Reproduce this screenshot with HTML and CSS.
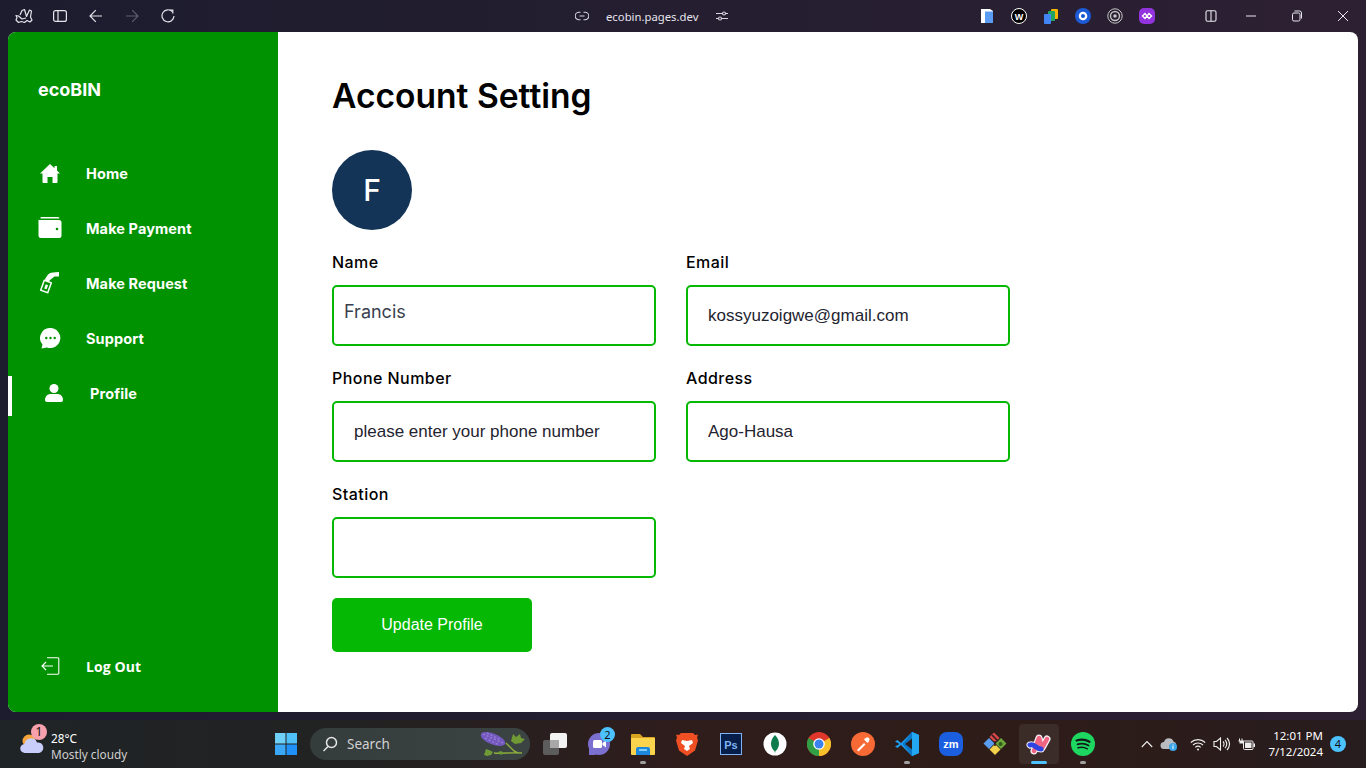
FILE: index.html
```html
<!DOCTYPE html>
<html lang="en">
<head>
    <meta charset="UTF-8">
    <meta name="viewport" content="width=device-width, initial-scale=1.0">
    <title>ecoBIN - Account Setting</title>
    <link rel="stylesheet" href="styles.css">
</head>
<body>

    <!-- browser title bar -->
    <div class="titlebar">
        <div class="tbar-left">
            <span class="tbar-btn"><svg width="18" height="16" viewBox="0 0 18 16" fill="none" stroke="#e4e4ec" stroke-width="1.200" stroke-linejoin="round"><path d="M5 7 7 2.500l2.500-1 2 7 3-6.500 2 1-1 6 1.500 3-2 2-3-1.500-2.500 2-3-1-3 1-2.500-2.500 1-2.500-1-2 2.500.500 3.500 3 4-1"/></svg></span>
            <span class="tbar-btn"><svg width="16" height="14" viewBox="0 0 16 14" fill="none" stroke="#e4e4ec" stroke-width="1.200"><rect x="1.600" y="1.600" width="12.800" height="10.800" rx="2"/><path d="M6 1.600v10.800"/></svg></span>
            <span class="tbar-btn"><svg width="14" height="14" viewBox="0 0 14 14" fill="none" stroke="#e4e4ec" stroke-width="1.200"><path d="M13 7H1.200M6.800 1.200 1 7l5.800 5.800"/></svg></span>
            <span class="tbar-btn"><svg width="14" height="14" viewBox="0 0 14 14" fill="none" stroke="#5f5c6c" stroke-width="1.200"><path d="M1 7h11.800M7.200 1.200 13 7l-5.800 5.800"/></svg></span>
            <span class="tbar-btn"><svg width="14" height="14" viewBox="0 0 14 14" fill="none" stroke="#e4e4ec" stroke-width="1.200"><path d="M11.500 2.800A6 6 0 1 0 13 7"/><path d="M8.500 1.200h3.300v3.300" /></svg></span>
        </div>
        <div class="tbar-url">
            <svg width="14" height="10" viewBox="0 0 14 10" fill="none" stroke="#d8d6e0" stroke-width="1.100"><path d="M5.500 1.200H4a3.800 3.800 0 0 0 0 7.600h1.500M8.500 1.200H10a3.800 3.800 0 0 1 0 7.600H8.500M4.500 5h5"/></svg>
            <span class="url-text">ecobin.pages.dev</span>
            <svg width="14" height="12" viewBox="0 0 14 12" fill="none" stroke="#d8d6e0" stroke-width="1.100"><path d="M1 3.500h6.500M10.500 3.500H13M1 8.500h2.500M6.500 8.500H13"/><circle cx="9" cy="3.500" r="1.500"/><circle cx="5" cy="8.500" r="1.500"/></svg>
        </div>
        <div class="tbar-ext">
            <span class="ext"><svg width="14" height="16" viewBox="0 0 14 16"><path d="M1 1h9l3 2v12H1z" fill="#fff"/><rect x="5" y="3.500" width="8" height="11.500" fill="#5a9cf5"/></svg></span>
            <span class="ext"><svg width="16" height="16" viewBox="0 0 16 16"><circle cx="8" cy="8" r="7.500" fill="#000" stroke="#fff"/><text x="8" y="11.500" class="ext-w">W</text></svg></span>
            <span class="ext"><svg width="16" height="16" viewBox="0 0 16 16"><rect x="8" y="1" width="7" height="10" rx="1" fill="#f5b400"/><rect x="5" y="3" width="7" height="10" rx="1" fill="#1fa463"/><rect x="1" y="6" width="7" height="10" rx="1" fill="#4285f4"/></svg></span>
            <span class="ext"><svg width="16" height="16" viewBox="0 0 16 16"><circle cx="8" cy="8" r="8" fill="#1d5ad6"/><circle cx="8" cy="8" r="3.200" fill="none" stroke="#fff" stroke-width="2.200"/></svg></span>
            <span class="ext"><svg width="16" height="16" viewBox="0 0 16 16" fill="none" stroke="#c6c6c6"><circle cx="8" cy="8" r="7.200"/><circle cx="8" cy="8" r="4.500" stroke-width="1.400"/><circle cx="8" cy="8" r="1.800" fill="#c6c6c6" stroke="none"/></svg></span>
            <span class="ext"><svg width="16" height="16" viewBox="0 0 16 16"><rect width="16" height="16" rx="5" fill="#9333dd"/><path d="M3.500 8 6 5.500 10 10.500 12.500 8 10 5.500 6 10.500z" fill="none" stroke="#fff" stroke-width="1.400"/></svg></span>
        </div>
        <div class="tbar-win">
            <span class="win-btn win-split"><svg width="12" height="12" viewBox="0 0 12 12" fill="none" stroke="#e8e8ee" stroke-width="1.100"><rect x="1" y=".800" width="10" height="10.400" rx="1.500"/><path d="M6 .800v10.400"/></svg></span>
            <span class="win-btn"><svg width="12" height="12" viewBox="0 0 12 12" fill="none" stroke="#e8e8ee"><path d="M1 6h10"/></svg></span>
            <span class="win-btn"><svg width="12" height="12" viewBox="0 0 12 12" fill="none" stroke="#e8e8ee"><rect x="1.500" y="3" width="7.500" height="8" rx="1.500"/><path d="M3.500 1h5a2 2 0 0 1 2 2v5.500"/></svg></span>
            <span class="win-btn"><svg width="12" height="12" viewBox="0 0 12 12" fill="none" stroke="#e8e8ee"><path d="m1 1 10 10M11 1 1 11"/></svg></span>
        </div>
    </div>

    <div class="app">
        <aside class="sidebar">
            <div class="logo">ecoBIN</div>
            <nav class="nav">
                <a class="nav-item">
                    <span class="nav-icon"><svg width="20" height="19" viewBox="0 0 20 19" fill="#fff"><path d="M10 0 0 9.500h2.500V18a1 1 0 0 0 1 1h4v-6h5v6h4a1 1 0 0 0 1-1V9.500H20l-3-2.900V2h-2.500v2.200z"/></svg></span>
                    Home
                </a>
                <a class="nav-item">
                    <span class="nav-icon"><svg width="24" height="22" viewBox="0 0 24 22" fill="#fff"><path d="M3 0h17a1.500 1.500 0 0 1 1.500 1.500H2.500A1.500 1.500 0 0 1 3 0z"/><path d="M2.500 3H21a2.500 2.500 0 0 1 2.500 2.500v13A2.500 2.500 0 0 1 21 21H3a2.500 2.500 0 0 1-2.500-2.500V2.500A2.500 2.500 0 0 0 2.500 3z"/><circle cx="19" cy="12" r="1.300" fill="#009200"/></svg></span>
                    Make Payment
                </a>
                <a class="nav-item">
                    <span class="nav-icon"><svg width="22" height="22" viewBox="0 0 22 22" fill="#fff"><path d="M20 0v4.500h-4.500L11 8l-1.500 2.500L7 9.500 6 7l3-4.500Q11 .500 14 .500z"/><g transform="rotate(20 7 14.500)"><rect x="2.500" y="8.500" width="9" height="12" rx=".500"/><rect x="4" y="10" width="6" height="9" fill="#009200"/><rect x="6" y="12.500" width="2.500" height="4.500"/></g></svg></span>
                    Make Request
                </a>
                <a class="nav-item">
                    <span class="nav-icon"><svg width="21" height="21" viewBox="0 0 21 21" fill="#fff"><path d="M10.500 0a10 10 0 1 1-3.600 19.400L1.500 20.500l1-4A10 10 0 0 1 10.500 0z"/><circle cx="6.300" cy="10" r="1.200" fill="#009200"/><circle cx="10.500" cy="10" r="1.200" fill="#009200"/><circle cx="14.700" cy="10" r="1.200" fill="#009200"/></svg></span>
                    Support
                </a>
                <a class="nav-item active">
                    <span class="nav-icon"><svg width="18" height="18" viewBox="0 0 18 18" fill="#fff"><circle cx="9" cy="4.500" r="4.500"/><path d="M0 16c0-4 3-6 5.500-6h7c2.500 0 5.500 2 5.500 6 0 1-.800 2-2 2H2c-1.200 0-2-1-2-2z"/></svg></span>
                    Profile
                </a>
            </nav>
            <a class="nav-item logout">
                <span class="nav-icon"><svg width="20" height="18" viewBox="0 0 20 18" fill="none" stroke="#fff" stroke-width="1.100"><path d="M7 .800h11a.800.800 0 0 1 .800.800v14.800a.800.800 0 0 1-.800.800H7"/><path d="M13 9H2M6 5 2 9l4 4"/></svg></span>
                Log Out
            </a>
        </aside>

        <main class="main">
            <h1 class="page-title">Account Setting</h1>
            <div class="avatar">F</div>
            <form class="profile-form">
                <div class="field">
                    <label class="field-label">Name</label>
                    <input class="field-input input-name" type="text" value="Francis">
                </div>
                <div class="field">
                    <label class="field-label">Email</label>
                    <input class="field-input" type="email" value="kossyuzoigwe@gmail.com">
                </div>
                <div class="field">
                    <label class="field-label">Phone Number</label>
                    <input class="field-input" type="text" placeholder="please enter your phone number">
                </div>
                <div class="field">
                    <label class="field-label">Address</label>
                    <input class="field-input" type="text" value="Ago-Hausa">
                </div>
                <div class="field">
                    <label class="field-label">Station</label>
                    <input class="field-input" type="text">
                </div>
            </form>
            <button class="update-btn" type="button">Update Profile</button>
        </main>
    </div>

    <!-- windows taskbar -->
    <div class="taskbar">
        <div class="weather">
            <span class="weather-icon">
                <svg width="26" height="24" viewBox="0 0 26 24"><circle cx="10" cy="9" r="6.500" fill="#f5a53c"/><path d="M6 21a4.500 4.500 0 0 1-.500-9 6.500 6.500 0 0 1 12.500-1.500A5.300 5.300 0 0 1 20 21z" fill="#c9cdfa"/></svg>
                <span class="weather-badge">1</span>
            </span>
            <div class="weather-text">
                <div class="temp">28°C</div>
                <div class="cond">Mostly cloudy</div>
            </div>
        </div>
        <span class="tb-item">
            <svg width="24" height="24" viewBox="0 0 24 24"><rect x="1" y="1" width="10.500" height="10.500" fill="#6fd0f7"/><rect x="12.500" y="1" width="10.500" height="10.500" fill="#4fc0f8"/><rect x="1" y="12.500" width="10.500" height="10.500" fill="#3aa8f5"/><rect x="12.500" y="12.500" width="10.500" height="10.500" fill="#1f90f5"/></svg>
        </span>
        <div class="searchbox">
            <svg width="16" height="16" viewBox="0 0 16 16" fill="none" stroke="#e8e8e8" stroke-width="1.500"><circle cx="9.500" cy="6.500" r="5"/><path d="M6 10.500 1.500 15"/></svg>
            <span class="search-label">Search</span>
            <svg class="search-art" width="46" height="26" viewBox="0 0 46 26"><path d="M14 22c8 1 16-1 28 0M26 12l8 8 4 2" stroke="#8fb03c" stroke-width="1.400" fill="none"/><ellipse cx="13" cy="8" rx="13" ry="5.500" transform="rotate(22 13 8)" fill="#7358bd"/><path d="M3 3l20 9M7 2l14 7M5 7l14 7" stroke="#9a80db" stroke-width="1.300" stroke-dasharray="2 2"/><path d="M31 10l2-7 3 3 4-3 1 4 4 1-4 4-6 1z" fill="#6f9a35"/><path d="M4 24l2-6 3 1 4 2-2 3-4 1z" fill="#6f9a35"/><path d="M18 21l3-1 3 2-3 2z" fill="#6f9a35"/></svg>
        </div>
        <span class="tb-item">
            <svg width="26" height="24" viewBox="0 0 26 24"><rect x="1" y="8" width="16" height="15" rx="2" fill="#5c5c5c"/><rect x="8" y="1" width="17" height="15" rx="2" fill="#f2f2f2"/><rect x="8" y="8" width="9" height="8" fill="#a8a8a8"/></svg>
        </span>
        <span class="tb-item">
            <svg width="24" height="24" viewBox="0 0 24 24"><circle cx="12" cy="12" r="11" fill="#7b6fd0"/><path d="M2 16v7h7z" fill="#7b6fd0"/><rect x="6" y="8" width="9" height="8" rx="1.500" fill="#fff"/><path d="m15.500 11 3.500-2.500v7L15.500 13z" fill="#fff"/></svg>
            <span class="count-badge">2</span>
        </span>
        <span class="tb-item running">
            <svg width="24" height="24" viewBox="0 0 24 24"><path d="M0 3a1 1 0 0 1 1-1h8l3 3h11a1 1 0 0 1 1 1v3H0z" fill="#d9a520"/><path d="M0 6h24v16a1 1 0 0 1-1 1H1a1 1 0 0 1-1-1z" fill="#fcd34d"/><path d="M5 17a2 2 0 0 1 2-2h10a2 2 0 0 1 2 2v6H5z" fill="#1c87dd"/><rect x="8" y="17" width="8" height="2" fill="#7dcdf7"/></svg>
        </span>
        <span class="tb-item">
            <svg width="22" height="24" viewBox="0 0 22 24"><path d="M5 1h12l2 2 3-.500-1 3 1 3-3 10-8 5.500-8-5.500L0 8.500l1-3-1-3 3 .500z" fill="#f04e23"/><path d="M6 8l5 1 5-1 1 3-4 3 1 3-3 2-3-2 1-3-4-3z" fill="#fff"/></svg>
        </span>
        <span class="tb-item">
            <svg width="22" height="22" viewBox="0 0 22 22"><rect x=".500" y=".500" width="21" height="21" fill="#061e4a" stroke="#7fb3f5"/><text x="11" y="16" class="ps-text">Ps</text></svg>
        </span>
        <span class="tb-item">
            <svg width="24" height="24" viewBox="0 0 24 24"><circle cx="12" cy="12" r="11.500" fill="#fff"/><path d="M12 3c3 3 4 6 4 9s-2 6-3.500 7l-.500 2-.500-2C10 18 8 15 8 12s1-6 4-9z" fill="#0f7c4d"/></svg>
        </span>
        <span class="tb-item">
            <svg width="24" height="24" viewBox="0 0 24 24"><circle cx="12" cy="12" r="12" fill="#e0372c"/><path d="M12 12 22.400 6A12 12 0 0 1 12 24z" fill="#f8c12c"/><path d="M12 12 12 24A12 12 0 0 1 1.600 6z" fill="#2f9e44"/><circle cx="12" cy="12" r="5.800" fill="#fff"/><circle cx="12" cy="12" r="4.500" fill="#3b82f0"/></svg>
        </span>
        <span class="tb-item">
            <svg width="24" height="24" viewBox="0 0 24 24"><circle cx="12" cy="12" r="12" fill="#f76935"/><path d="M6 18l7-7 1.500 1.500-7 7z" fill="#fff"/><path d="M13 7.500c1.500-2 4-2.500 5-1.500s.500 3.500-1.500 5z" fill="#fff"/></svg>
        </span>
        <span class="tb-item running">
            <svg width="24" height="24" viewBox="0 0 24 24"><path d="M17 0 24 3v18l-7 3L6 13l-3.500 3L0 14.500 4.500 12 0 9.500 2.500 8 6 11z" fill="#1f9cf0"/><path d="M17 0 7.500 12 17 24l7-3V3zM17 6.500v11L10 12z" fill="#0a78c9"/><path d="M17 0l7 3v18l-7 3z" fill="#23a7f2"/><path d="M17 6.500 10 12l7 5.500z" fill="#2a1c1c"/></svg>
        </span>
        <span class="tb-item">
            <svg width="24" height="24" viewBox="0 0 24 24"><rect width="24" height="24" rx="8" fill="#1b5fe0"/><text x="12" y="16" class="zm-text">zm</text></svg>
        </span>
        <span class="tb-item">
            <svg width="24" height="24" viewBox="0 0 24 24"><path d="M6 6 11.500 11.500 6 17 .500 11.500z" fill="#5a9cf0"/><path d="M18 6 23.500 11.500 18 17 12.500 11.500z" fill="#6ea83a"/><path d="M12 12 17.500 17.500 12 23 6.500 17.500z" fill="#f2d24a"/><path d="M11 .500 16.500 6 12 10.500 6.500 5z" fill="#d84848"/><path d="M12 9v5M9 3l6 6" stroke="#2a1c1c" stroke-width="1.500"/><circle cx="17.500" cy="12" r="2" fill="#2f5a1a"/></svg>
        </span>
        <span class="tb-item tb-active">
            <svg width="26" height="22" viewBox="0 0 26 22" fill="none" stroke-linecap="round" stroke-linejoin="round"><path d="M4 12c4-2 6 4 11 4M8 18 13 5l3 10 5-9" stroke="#f4f0f4" stroke-width="7"/><path d="M8 18 13 5l3 10 5-9" stroke="#ef5a78" stroke-width="4.500"/><path d="M4 12c4-2 6 4 11 4" stroke="#1c35e0" stroke-width="5"/></svg>
        </span>
        <span class="tb-item running">
            <svg width="24" height="24" viewBox="0 0 24 24" fill="none" stroke="#13181a" stroke-linecap="round"><circle cx="12" cy="12" r="12" fill="#1ed760" stroke="none"/><path d="M5.500 8.500c4.500-1.300 9-1 13 1.300" stroke-width="2.200"/><path d="M6.500 12.300c3.800-1 7.800-.700 11 1.200" stroke-width="1.800"/><path d="M7 15.800c3.200-.800 6.500-.500 9.300 1" stroke-width="1.500"/></svg>
        </span>
        <div class="tray">
            <svg class="tray-chevron" width="12" height="8" viewBox="0 0 12 8" fill="none" stroke="#eee" stroke-width="1.100"><path d="M.800 7 6 1.500 11.200 7"/></svg>
            <span class="tray-cloud">
                <svg width="18" height="14" viewBox="0 0 18 14"><path d="M4 12a3.500 3.500 0 0 1 0-7 5 5 0 0 1 9.500-.500A4 4 0 0 1 14 12z" fill="#b8bcc0"/><circle cx="13" cy="10" r="4" fill="#3aa5e8"/><rect x="12.500" y="9" width="1" height="3" fill="#fff"/><rect x="12.500" y="7.500" width="1" height="1" fill="#fff"/></svg>
            </span>
            <svg class="tray-wifi" width="16" height="13" viewBox="0 0 16 13" fill="none" stroke="#eee" stroke-width="1.100"><path d="M.800 4.500a10.500 10.500 0 0 1 14.400 0M3 7a7.300 7.300 0 0 1 10 0M5.300 9.300a4 4 0 0 1 5.400 0"/><circle cx="8" cy="11.500" r="1" fill="#eee" stroke="none"/></svg>
            <svg class="tray-vol" width="17" height="14" viewBox="0 0 17 14" fill="none" stroke="#eee" stroke-width="1.100"><path d="M1 4.500h2.500L7.500 1v12L3.500 9.500H1z"/><path d="M10 4.500a3.500 3.500 0 0 1 0 5M12 2.800a6 6 0 0 1 0 8.400M14 1a8.500 8.500 0 0 1 0 12"/></svg>
            <svg class="tray-batt" width="17" height="13" viewBox="0 0 17 13" fill="#eee"><rect x="5.500" y="3" width="9.500" height="8.500" rx="1" fill="none" stroke="#eee"/><rect x="7" y="4.500" width="6.500" height="5.500"/><rect x="15.500" y="5.500" width="1.500" height="3.500"/><path d="M1 .500h1v2h1.500v-2h1v2H6v1H5.500v2h-4v-2H.500v-1H1z"/></svg>
            <div class="clock">
                <div>12:01 PM</div>
                <div>7/12/2024</div>
            </div>
            <span class="notif-badge">4</span>
        </div>
    </div>

</body>
</html>
```

FILE: styles.css
```css
* {
    box-sizing: border-box;
}

html, body {
    height: 100%;
}

body {
    margin: 0;
    width: 1366px;
    height: 768px;
    overflow: hidden;
    background: linear-gradient(90deg, #1c1c2e 0%, #241e30 50%, #2d2033 100%);
    font-family: "Inter", "Liberation Sans", sans-serif;
    display: flex;
    flex-direction: column;
}

/* title bar */
.titlebar {
    height: 32px;
    display: flex;
    align-items: center;
    padding-left: 6px;
}

.tbar-left {
    display: flex;
}

.tbar-btn {
    width: 36px;
    height: 32px;
    display: flex;
    align-items: center;
    justify-content: center;
}

.tbar-url {
    display: flex;
    align-items: center;
    margin-left: 389px;
}

.url-text {
    color: #e6e4ec;
    font-size: 11.300px;
    font-family: "Noto Sans", sans-serif;
    margin: 0 17px 0 17px;
}

.tbar-ext {
    display: flex;
    margin-left: 242px;
}

.ext {
    width: 32px;
    height: 32px;
    display: flex;
    align-items: center;
    justify-content: center;
}

.ext-w {
    font: 700 9px "Liberation Sans", sans-serif;
    fill: #fff;
    text-anchor: middle;
}

.tbar-win {
    display: flex;
    margin-left: 31px;
}

.win-btn {
    width: 46px;
    height: 32px;
    display: flex;
    align-items: center;
    justify-content: center;
}

.win-split {
    width: 34px;
}

/* app frame */
.app {
    height: 680px;
    margin: 0 8px;
    display: flex;
    border-radius: 8px;
    overflow: hidden;
    background: #fff;
}

.sidebar {
    width: 270px;
    background: #009200;
    color: #fff;
    display: flex;
    flex-direction: column;
    padding-top: 46px;
    padding-bottom: 23px;
}

.logo {
    font-size: 18px;
    font-weight: 700;
    line-height: 24px;
    padding-left: 30px;
}

.nav {
    margin-top: 54px;
    display: flex;
    flex-direction: column;
    gap: 15px;
}

.nav-item {
    height: 40px;
    display: flex;
    align-items: center;
    padding-left: 30px;
    padding-bottom: 6px;
    font-size: 14.500px;
    font-weight: 700;
    letter-spacing: 0.1px;
}

.nav-item.active {
    border-left: 4px solid #fff;
}

.nav-icon {
    width: 24px;
    height: 24px;
    margin-right: 24px;
    display: flex;
    align-items: center;
    justify-content: center;
}

.logout {
    margin-top: auto;
    font-size: 14px;
    font-family: "Open Sans", sans-serif;
}

/* main area */
.main {
    flex: 1;
    padding: 40px 0 0 54px;
}

.page-title {
    margin: 0;
    font-size: 33.600px;
    line-height: 48px;
    font-weight: 600;
    color: #000;
}

.avatar {
    width: 80px;
    height: 80px;
    margin-top: 30px;
    border-radius: 50%;
    background: #133456;
    color: #fff;
    font-size: 30px;
    font-weight: 500;
    display: flex;
    align-items: center;
    justify-content: center;
}

.profile-form {
    margin-top: 20px;
    display: grid;
    grid-template-columns: 324px 324px;
    column-gap: 30px;
    row-gap: 20px;
}

.field {
    display: flex;
    flex-direction: column;
}

.field-label {
    font-size: 16px;
    font-weight: 500;
    line-height: 24px;
    letter-spacing: 0.45px;
    margin-bottom: 11px;
    color: #000;
}

.field-input {
    height: 61px;
    border: 2px solid #04b804;
    border-radius: 5px;
    padding: 0 20px;
    font-family: "Liberation Sans", Arial, sans-serif;
    font-size: 17px;
    color: #1f2430;
    background: #fff;
    outline: none;
}

.field-input::placeholder {
    color: #1f2430;
    opacity: 1;
}

.input-name {
    padding: 0 10px 9px;
    font-family: "Inter", sans-serif;
    font-size: 18px;
    color: #3a3f4e;
}

.update-btn {
    display: block;
    width: 200px;
    height: 54px;
    margin-top: 20px;
    border: 0;
    border-radius: 5px;
    background: #04b804;
    color: #fff;
    font-family: "Liberation Sans", Arial, sans-serif;
    font-size: 16px;
}

/* taskbar */
.taskbar {
    height: 48px;
    margin-top: 8px;
    display: flex;
    align-items: center;
    background: linear-gradient(90deg, #1f2426 0%, #222222 25%, #2f1d1c 50%, #2e1c18 75%, #271c1e 100%);
    font-family: "Noto Sans", "Open Sans", sans-serif;
    color: #fff;
}

.weather {
    width: 264px;
    display: flex;
    align-items: center;
    padding-left: 19px;
}

.weather-icon {
    position: relative;
    width: 26px;
    height: 24px;
    margin-right: 6px;
}

.weather-badge {
    position: absolute;
    top: -8px;
    left: 12px;
    width: 16px;
    height: 16px;
    border-radius: 50%;
    background: #f7a1ac;
    color: #111;
    font-size: 12px;
    line-height: 16px;
    text-align: center;
}

.weather-text {
    padding-top: 3px;
    font-size: 11.800px;
    line-height: 16px;
}

.cond {
    color: #cfcfcf;
}

.tb-item {
    position: relative;
    width: 44px;
    height: 48px;
    display: flex;
    align-items: center;
    justify-content: center;
    flex: none;
}

.tb-item.running::after {
    content: "";
    position: absolute;
    left: 19px;
    bottom: 4px;
    width: 6px;
    height: 3px;
    border-radius: 2px;
    background: #a0a0a0;
}

.tb-active::before {
    content: "";
    position: absolute;
    top: 4px;
    left: 2px;
    width: 40px;
    height: 40px;
    border-radius: 4px;
    background: rgba(255, 255, 255, 0.07);
}

.tb-active::after {
    content: "";
    position: absolute;
    left: 14px;
    bottom: 4px;
    width: 16px;
    height: 3px;
    border-radius: 2px;
    background: #4cc2ff;
}

.count-badge {
    position: absolute;
    top: 7px;
    left: 23px;
    width: 15px;
    height: 15px;
    border-radius: 50%;
    background: #4cc2ff;
    color: #111;
    font-size: 11px;
    line-height: 15px;
    text-align: center;
}

.ps-text {
    font: 700 11px "Liberation Sans", sans-serif;
    fill: #7fb3f5;
    text-anchor: middle;
}

.zm-text {
    font: 700 11px "Liberation Sans", sans-serif;
    fill: #fff;
    text-anchor: middle;
}

.searchbox {
    width: 220px;
    height: 32px;
    margin: 0 3px 0 2px;
    padding-left: 12px;
    border-radius: 16px;
    background: linear-gradient(90deg, #343c3c, #3b4343);
    display: flex;
    align-items: center;
    flex: none;
}

.search-label {
    margin-left: 9px;
    font-size: 13.500px;
    color: #d2d2d2;
}

.search-art {
    margin-left: auto;
    margin-right: 4px;
}

.tray {
    margin-left: auto;
    display: flex;
    align-items: center;
    height: 48px;
    padding-right: 20px;
}

.tray-chevron {
    margin-right: 7px;
}

.tray-cloud {
    display: flex;
    margin-right: 12px;
}

.tray-wifi {
    margin-right: 7px;
}

.tray-vol {
    margin-right: 8px;
}

.tray-batt {
    margin-right: 8px;
}

.clock {
    width: 60px;
    text-align: right;
    font-size: 11.500px;
    line-height: 16px;
}

.notif-badge {
    width: 16px;
    height: 16px;
    margin-left: 7px;
    border-radius: 50%;
    background: #4cc2ff;
    color: #111;
    font-size: 11px;
    line-height: 16px;
    text-align: center;
}
```
